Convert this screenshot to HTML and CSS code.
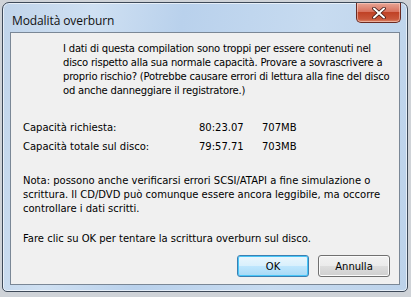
FILE: index.html
```html
<!DOCTYPE html>
<html>
<head>
<meta charset="utf-8">
<link rel="stylesheet" href="styles.css">
</head>
<body>
<div class="window">
  <div class="titlebar">
    <span class="title">Modalità overburn</span>
    <div class="close">
      <svg width="14" height="12" viewBox="0 0 14 12"><path d="M2 1.5 L12 10.5 M12 1.5 L2 10.5" stroke="#3a1410" stroke-width="3.6" stroke-linecap="round"/><path d="M2 1.5 L12 10.5 M12 1.5 L2 10.5" stroke="#fff" stroke-width="2" stroke-linecap="round"/></svg>
    </div>
  </div>
  <div class="client">
    <p class="intro">I dati di questa compilation sono troppi per essere contenuti nel<br>disco rispetto alla sua normale capacità. Provare a sovrascrivere a<br>proprio rischio? (Potrebbe causare errori di lettura alla fine del disco<br>od anche danneggiare il registratore.)</p>
    <div class="caps">
      <div class="row"><span class="lbl">Capacità richiesta:</span><span class="time">80:23.07</span><span class="size">707MB</span></div>
      <div class="row"><span class="lbl">Capacità totale sul disco:</span><span class="time">79:57.71</span><span class="size">703MB</span></div>
    </div>
    <p class="note">Nota: possono anche verificarsi errori SCSI/ATAPI a fine simulazione o scrittura. Il CD/DVD può comunque essere ancora leggibile, ma occorre controllare i dati scritti.</p>
    <p class="final">Fare clic su OK per tentare la scrittura overburn sul disco.</p>
    <div class="buttons">
      <button class="btn default">OK</button>
      <button class="btn">Annulla</button>
    </div>
  </div>
</div>
</body>
</html>
```
FILE: styles.css
```css
html, body { margin: 0; padding: 0; }
body {
  width: 411px; height: 297px; overflow: hidden;
  background: #cfd3d8;
  font-family: Tahoma, "DejaVu Sans", sans-serif;
}
.window {
  margin: 2px 3px 0 2px;
  height: 290px;
  box-sizing: border-box;
  border: 1px solid #3e4a59;
  border-radius: 7px 7px 5px 5px;
  background: linear-gradient(100deg, #c0d4ea 0%, #cfe0f2 20%, #b9d1ec 40%, #c7dbf0 70%, #bcd2ea 100%);
  box-shadow: inset 0 0 0 1px rgba(255,255,255,0.6);
  display: flex; flex-direction: column;
  padding: 0 7px 6px 7px;
}
.titlebar {
  height: 29px;
  display: flex; justify-content: space-between; align-items: flex-start;
}
.title {
  font-family: "Open Sans", "Noto Sans", sans-serif;
  font-size: 12px; color: #111;
  margin-top: 9px; margin-left: 2px;
  letter-spacing: -0.1px;
}
.close {
  width: 45px; height: 20px;
  margin-right: -1px;
  box-sizing: border-box;
  border: 1px solid #6b2a22; border-top: none;
  border-radius: 0 0 5px 5px;
  background: linear-gradient(#e8a595 0%, #d9735f 45%, #c04226 50%, #c9573b 85%, #dd8a6c 100%);
  box-shadow: inset 0 0 0 1px rgba(255,220,210,0.5);
  display: flex; align-items: center; justify-content: center;
}
.client {
  flex: 1;
  background: #f0f0f0;
  border: 1px solid #7a8796;
  padding: 9px 12px 0 12px;
  font-family: "DejaVu Sans", sans-serif;
  font-size: 10px; line-height: 14px; color: #000;
  display: flex; flex-direction: column;
}
p { margin: 0; }
.intro { margin-left: 40px; white-space: nowrap; letter-spacing: -0.2px; }
.caps { margin-top: 23px; }
.row { display: flex; height: 19px; }
.lbl { width: 176px; }
.time { width: 63px; }
.note { margin-top: 15px; }
.final { margin-top: 16px; }
.buttons { display: flex; justify-content: flex-end; gap: 9px; margin-top: 9px; margin-right: -3px; }
.btn {
  width: 72px; height: 22px;
  font-family: "DejaVu Sans", sans-serif; font-size: 10px; color: #000;
  border: 1px solid #707070; border-radius: 3px;
  background: linear-gradient(#f2f2f2 0%, #ebebeb 48%, #dddddd 52%, #cfcfcf 100%);
  box-shadow: inset 0 0 0 1px #fbfbfb;
  padding: 0;
}
.btn.default {
  border-color: #3c7fb1;
  background: linear-gradient(#eaf6fd 0%, #d9f0fc 48%, #bee6fd 52%, #a7d9f5 100%);
  box-shadow: inset 0 0 0 1px #48c6f8;
}
```
